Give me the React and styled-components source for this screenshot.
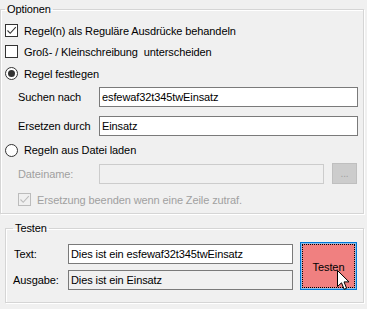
import React from 'react';
import styled, { createGlobalStyle } from 'styled-components';

const Global = createGlobalStyle`
    html, body {
        margin: 0;
        padding: 0;
        background: #f0f0f0;
    }
    body {
        font-family: "Liberation Sans", Arial, sans-serif;
        font-size: 11px;
        letter-spacing: -0.1px;
        color: #000;
    }
`

const Form = styled.div`
    width: 367px;
    height: 309px;
    overflow: hidden;
    background: #f0f0f0;
`

const GroupBox = styled.fieldset`
    box-sizing: border-box;
    margin: ${({ $top }) => $top}px 3px 0 ${({ $left }) => $left}px;
    padding: 0 0 0 ${({ $pad }) => $pad}px;
    height: ${({ $height }) => $height}px;
    border: 1px solid #d5d5d5;
    box-shadow: 1px 1px 0 #fff, inset 1px 1px 0 #fff;
    min-width: 0;
`

const Legend = styled.legend`
    padding: 0 2px;
    line-height: 14px;
    font-size: 11px;
`

const CheckRow = styled.label`
    display: flex;
    align-items: center;
    height: ${({ $h }) => $h || 21}px;
    margin-top: ${({ $mt }) => $mt || 0}px;
    margin-left: ${({ $indent }) => $indent || 0}px;
    color: ${({ $disabled }) => ($disabled ? '#a0a0a0' : '#000')};
    gap: 6px;
`

const CheckBox = styled.span`
    box-sizing: border-box;
    width: 13px;
    height: 13px;
    border: 1px solid ${({ $disabled }) => ($disabled ? '#bcbcbc' : '#333')};
    background: ${({ $disabled }) => ($disabled ? '#f0f0f0' : '#fff')};
    display: flex;
    align-items: center;
    justify-content: center;
    flex: none;
`

const Radio = styled.span`
    box-sizing: border-box;
    width: 13px;
    height: 13px;
    border-radius: 50%;
    border: 1px solid #333;
    background: #fff;
    display: flex;
    align-items: center;
    justify-content: center;
    flex: none;

    &::after {
        content: '';
        width: 7px;
        height: 7px;
        border-radius: 50%;
        background: ${({ $checked }) => ($checked ? '#333' : 'transparent')};
    }
`

const FieldRow = styled.div`
    display: flex;
    align-items: center;
    margin-top: ${({ $mt }) => $mt || 0}px;
    margin-left: ${({ $indent }) => $indent || 0}px;
    height: ${({ $h }) => $h || 20}px;
`

const FieldLabel = styled.span`
    width: ${({ $w }) => $w}px;
    flex: none;
    color: ${({ $disabled }) => ($disabled ? '#a0a0a0' : '#000')};
`

const TextBox = styled.div`
    box-sizing: border-box;
    width: ${({ $w }) => $w}px;
    height: 20px;
    flex: none;
    border: 1px solid ${({ $disabled }) => ($disabled ? '#cccccc' : '#7a7a7a')};
    background: ${({ $disabled, $readOnly }) => ($disabled || $readOnly ? '#f0f0f0' : '#fff')};
    padding: 0 2px;
    display: flex;
    align-items: center;
    white-space: nowrap;
    overflow: hidden;
`

const SmallButton = styled.div`
    box-sizing: border-box;
    width: 25px;
    height: 21px;
    margin-left: 8px;
    background: #cccccc;
    border: 1px solid #bfbfbf;
    color: #a0a0a0;
    display: flex;
    align-items: flex-end;
    justify-content: center;
    padding-bottom: 4px;
    font-size: 10px;
    line-height: 1;
`

const TestBody = styled.div`
    display: flex;
    align-items: flex-start;
    padding-top: 7px;
`

const TestFields = styled.div`
    display: flex;
    flex-direction: column;
    padding-top: 2px;
    gap: 6px;
`

const TestButton = styled.div`
    position: relative;
    box-sizing: border-box;
    width: 57px;
    height: 48px;
    margin-left: 7px;
    background: #f08080;
    border: 1px solid #0078d7;
    box-shadow: inset 0 0 0 1px #8fbfe8;
    display: flex;
    align-items: center;
    justify-content: center;
    padding-top: 1px;

    &::after {
        content: '';
        position: absolute;
        inset: 1px;
        border: 1px dotted #000;
    }
`

const Cursor = styled.svg`
    position: absolute;
    left: 36px;
    top: 27px;
    z-index: 2;
`

const Check = ({ color }) => (
    <svg width="11" height="11" viewBox="0 0 11 11">
        <path d="M1.5 5.5 L4.2 8.3 L9.8 2.2" fill="none" stroke={color} strokeWidth="1.1" />
    </svg>
)

export default function App() {
    return (
        <Form>
            <Global />
            <GroupBox $top={2} $left={0} $pad={4} $height={212}>
                <Legend>Optionen</Legend>
                <CheckRow $mt={4}>
                    <CheckBox><Check color="#333" /></CheckBox>
                    Regel(n) als Reguläre Ausdrücke behandeln
                </CheckRow>
                <CheckRow>
                    <CheckBox />
                    Groß- / Kleinschreibung&nbsp; unterscheiden
                </CheckRow>
                <CheckRow $h={23}>
                    <Radio $checked />
                    Regel festlegen
                </CheckRow>
                <FieldRow $mt={2} $indent={13}>
                    <FieldLabel $w={81}>Suchen nach</FieldLabel>
                    <TextBox $w={259}>esfewaf32t345twEinsatz</TextBox>
                </FieldRow>
                <FieldRow $mt={9} $indent={13}>
                    <FieldLabel $w={81}>Ersetzen durch</FieldLabel>
                    <TextBox $w={259}>Einsatz</TextBox>
                </FieldRow>
                <CheckRow $mt={4} $h={20}>
                    <Radio />
                    Regeln aus Datei laden
                </CheckRow>
                <FieldRow $mt={3} $indent={13} $h={21}>
                    <FieldLabel $w={81} $disabled>Dateiname:</FieldLabel>
                    <TextBox $w={225} $disabled />
                    <SmallButton>...</SmallButton>
                </FieldRow>
                <CheckRow $mt={5} $h={21} $indent={13} $disabled>
                    <CheckBox $disabled><Check color="#bcbcbc" /></CheckBox>
                    Ersetzung beenden wenn eine Zeile zutraf.
                </CheckRow>
            </GroupBox>

            <GroupBox $top={7} $left={5} $pad={7} $height={82}>
                <Legend>Testen</Legend>
                <TestBody>
                    <TestFields>
                        <FieldRow $indent={1}>
                            <FieldLabel $w={54}>Text:</FieldLabel>
                            <TextBox $w={225}>Dies ist ein esfewaf32t345twEinsatz</TextBox>
                        </FieldRow>
                        <FieldRow>
                            <FieldLabel $w={55}>Ausgabe:</FieldLabel>
                            <TextBox $w={225} $readOnly>Dies ist ein Einsatz</TextBox>
                        </FieldRow>
                    </TestFields>
                    <TestButton>
                        Testen
                        <Cursor width="13" height="21" viewBox="0 0 13 21">
                            <path d="M0.5 0.5 L0.5 16.5 L4.5 12.8 L7.2 19.3 L9.6 18.3 L7 11.9 L12 11.9 Z" fill="#fff" stroke="#000" strokeWidth="1" strokeLinejoin="miter" />
                        </Cursor>
                    </TestButton>
                </TestBody>
            </GroupBox>
        </Form>
    );
}
